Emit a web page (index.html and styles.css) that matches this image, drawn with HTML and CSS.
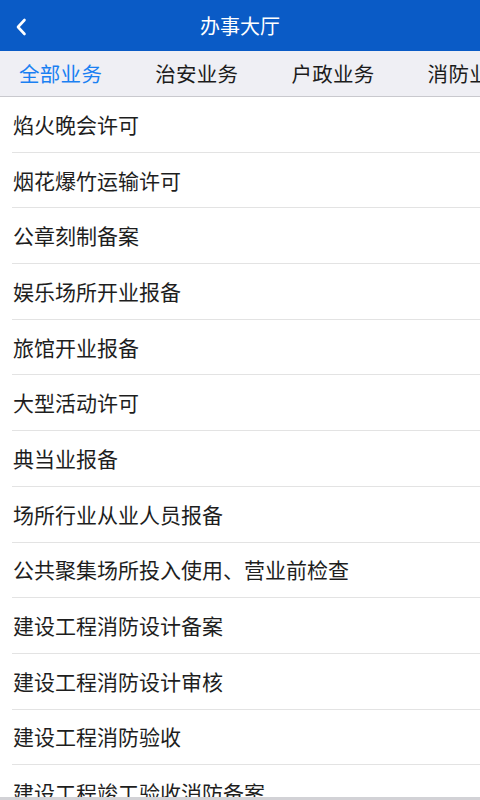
FILE: index.html
```html
<!DOCTYPE html>
<html lang="zh-CN">
<head>
    <meta charset="UTF-8">
    <meta name="viewport" content="width=device-width, initial-scale=1.0">
    <title>办事大厅</title>
    <link rel="stylesheet" href="styles.css">
</head>
<body>
    <div class="page">
        <header class="topbar">
            <a class="back" href="#">
                <svg width="12" height="18" viewBox="0 0 12 18">
                    <path d="M9.5 2 L3 9 L9.5 16" fill="none" stroke="#fff" stroke-width="2.6" stroke-linecap="round" stroke-linejoin="round"/>
                </svg>
            </a>
            <h1>办事大厅</h1>
        </header>
        <nav class="tabs">
            <span class="tab active">全部业务</span>
            <span class="tab">治安业务</span>
            <span class="tab">户政业务</span>
            <span class="tab">消防业务</span>
        </nav>
        <ul class="list">
            <li>焰火晚会许可</li>
            <li>烟花爆竹运输许可</li>
            <li>公章刻制备案</li>
            <li>娱乐场所开业报备</li>
            <li>旅馆开业报备</li>
            <li>大型活动许可</li>
            <li>典当业报备</li>
            <li>场所行业从业人员报备</li>
            <li>公共聚集场所投入使用、营业前检查</li>
            <li>建设工程消防设计备案</li>
            <li>建设工程消防设计审核</li>
            <li>建设工程消防验收</li>
            <li>建设工程竣工验收消防备案</li>
        </ul>
        <div class="bottom"></div>
    </div>
</body>
</html>
```

FILE: styles.css
```css
html, body {
    margin: 0;
    padding: 0;
    height: 100%;
}
body {
    font-family: "Noto Sans CJK SC", "Noto Sans", sans-serif;
    background: #fff;
    color: #222;
}
.page {
    height: 100vh;
    display: flex;
    flex-direction: column;
    overflow: hidden;
}
.topbar {
    flex: 0 0 51px;
    background: #0a5bc6;
    display: flex;
    align-items: center;
    justify-content: center;
    position: relative;
}
.topbar h1 {
    margin: 0;
    color: #fff;
    font-size: 20px;
    font-weight: normal;
    line-height: 1;
    padding-left: 0;
}
.back {
    position: absolute;
    left: 15px;
    top: 17px;
    display: block;
    width: 12px;
    height: 18px;
}
.tabs {
    flex: 0 0 45px;
    background: #efeff4;
    border-bottom: 1px solid #c9c9ce;
    display: flex;
    align-items: center;
    gap: 53px;
    padding-left: 19px;
    white-space: nowrap;
    overflow: hidden;
}
.tab {
    font-size: 20.5px;
    color: #1c1c1c;
    letter-spacing: 0.3px;
    line-height: 1;
    flex: none;
}
.tab.active {
    color: #1a80f2;
}
.list {
    flex: 1;
    list-style: none;
    margin: 0;
    padding: 0 0 0 12px;
    overflow: hidden;
}
.list li {
    height: 55.7px;
    box-sizing: border-box;
    border-bottom: 1.5px solid #e3e3e3;
    display: flex;
    align-items: center;
    padding-left: 1px;
    padding-bottom: 1px;
    font-size: 21px;
    color: #1e1e1e;
    white-space: nowrap;
}
.bottom {
    flex: 0 0 3px;
    background: #d2d2d6;
}
```
